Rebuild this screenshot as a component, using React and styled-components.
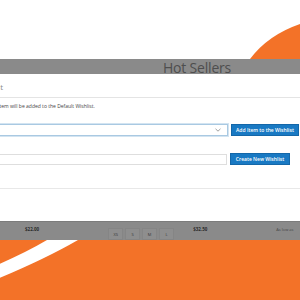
import styled, { createGlobalStyle } from 'styled-components';

const Global = createGlobalStyle`
  html, body {
    margin: 0;
    padding: 0;
    background: #ffffff;
    overflow: hidden;
  }
  body {
    font-family: "Open Sans", "Liberation Sans", sans-serif;
  }
`;

const Page = styled.div`
  width: 300px;
  height: 300px;
  overflow: hidden;
  display: flex;
  flex-direction: column;
`;

const Hero = styled.div`
  height: 59px;
  display: flex;
  justify-content: flex-end;
  align-items: flex-end;
  background: #ffffff;
`;

const Band = styled.div`
  height: ${(p) => p.h}px;
  background: #8a8a8a;
  display: flex;
  align-items: ${(p) => (p.bottom ? 'flex-start' : 'center')};
  border-top: ${(p) => (p.bottom ? '1px solid #7c7c7c' : 'none')};
  box-sizing: border-box;
`;

const HotSellers = styled.div`
  margin-left: 163px;
  font-size: 14px;
  font-weight: 400;
  letter-spacing: -0.2px;
  color: #4e4e4e;
  line-height: 15px;
  padding-top: 1px;
`;

const Modal = styled.div`
  height: 147px;
  width: 420px;
  margin-left: -120px;
  background: #ffffff;
  display: flex;
  flex-direction: column;
`;

const Header = styled.div`
  height: 23px;
  border-bottom: 1px solid #e4e4e4;
  display: flex;
  align-items: center;
`;

const Title = styled.div`
  width: 123px;
  text-align: right;
  font-size: 8px;
  color: #8a8a8a;
  padding-top: 2px;
`;

const Body = styled.div`
  padding: 5px 0 0 118px;
  display: flex;
  flex-direction: column;
`;

const Note = styled.div`
  font-size: 5px;
  color: #444;
  line-height: 7px;
  margin-bottom: 14px;
`;

const Row = styled.div`
  display: flex;
  align-items: center;
  gap: 3px;
  margin-bottom: ${(p) => p.mb}px;
`;

const Field = styled.div`
  width: ${(p) => p.w}px;
  height: ${(p) => p.h}px;
  box-sizing: border-box;
  border: 1px solid ${(p) => (p.focus ? '#a9c9e2' : '#dedede')};
  box-shadow: ${(p) => (p.focus ? '0 0 0 1px #d3e4f1' : 'none')};
  background: #ffffff;
  display: flex;
  align-items: center;
  justify-content: flex-end;
  padding-right: 6px;
`;

const Button = styled.div`
  width: ${(p) => p.w}px;
  height: 12px;
  background: #1979c3;
  border: 1px solid #1467a8;
  box-sizing: border-box;
  color: #ffffff;
  font-size: 5px;
  font-weight: 600;
  display: flex;
  align-items: center;
  justify-content: center;
  white-space: nowrap;
`;

const Divider = styled.div`
  margin-left: -118px;
  height: 1px;
  background: #e8e8e8;
`;

const Price = styled.div`
  margin-left: ${(p) => p.ml}px;
  margin-top: 4px;
  font-size: 4.5px;
  font-weight: 700;
  color: #2a2a2a;
`;

const Sizes = styled.div`
  margin-left: ${(p) => p.ml}px;
  margin-top: 6px;
  display: flex;
  gap: 2px;
`;

const Size = styled.div`
  width: 15px;
  height: 12px;
  background: #8e8e8e;
  border: 1px solid #858585;
  box-sizing: border-box;
  font-size: 4px;
  color: #3a3a3a;
  display: flex;
  align-items: center;
  justify-content: center;
`;

const LowAs = styled.div`
  margin-left: ${(p) => p.ml}px;
  margin-top: 5px;
  font-size: 4px;
  color: #444;
  white-space: nowrap;
`;

const Promo = styled.div`
  flex: 1;
  background: #f37228;
  display: flex;
  align-items: flex-start;
`;

const Chevron = () => (
  <svg width="6" height="4" viewBox="0 0 6 4">
    <path d="M0.5 0.8 L3 3.2 L5.5 0.8" fill="none" stroke="#777" strokeWidth="0.7" />
  </svg>
);

export default function App() {
  return (
    <Page>
      <Global />
      <Hero>
        <svg width="50" height="35" viewBox="250 25 50 35">
          <path d="M250 60 Q268 36 300 25 L300 60 Z" fill="#f37228" />
        </svg>
      </Hero>
      <Band h={15}>
        <HotSellers>Hot Sellers</HotSellers>
      </Band>
      <Modal>
        <Header>
          <Title>Add to Wishlist</Title>
        </Header>
        <Body>
          <Note>Item will be added to the Default Wishlist.</Note>
          <Row mb={17}>
            <Field w={230} h={12} focus>
              <Chevron />
            </Field>
            <Button w={68}>Add Item to the Wishlist</Button>
          </Row>
          <Row mb={23}>
            <Field w={229} h={11} />
            <Button w={60}>Create New Wishlist</Button>
          </Row>
        </Body>
        <Divider />
      </Modal>
      <Band h={19} bottom>
        <Price ml={25}>$22.00</Price>
        <Sizes ml={69}>
          <Size>XS</Size>
          <Size>S</Size>
          <Size>M</Size>
          <Size>L</Size>
        </Sizes>
        <Price ml={19}>$32.50</Price>
        <LowAs ml={69}>As low as</LowAs>
      </Band>
      <Promo>
        <svg width="300" height="60" viewBox="0 240 300 60">
          <path d="M-20 272 Q20 256 47 240 L78 240 Q40 262 -20 286 Z" fill="#ffffff" />
        </svg>
      </Promo>
    </Page>
  );
}
